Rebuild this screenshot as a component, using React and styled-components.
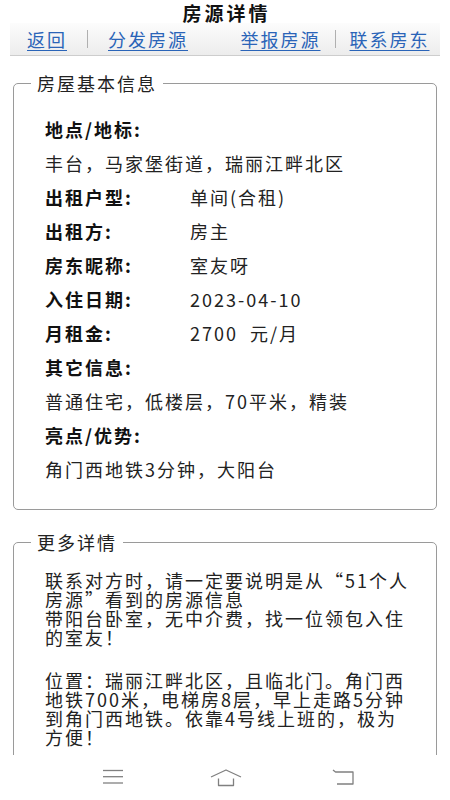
import React from "react";
import styled, { createGlobalStyle } from "styled-components";

const GlobalStyle = createGlobalStyle`
  html, body {
    margin: 0;
    padding: 0;
    background: #ffffff;
  }
  body {
    font-family: "Noto Sans CJK SC", "Liberation Sans", sans-serif;
    color: #222;
  }
`;

const Page = styled.div`
  display: flex;
  flex-direction: column;
  width: 450px;
`;

const Title = styled.h1`
  margin: 0;
  height: 23px;
  line-height: 26px;
  font-size: 19px;
  font-weight: 700;
  letter-spacing: 3px;
  padding-left: 3px;
  text-align: center;
  color: #111;
`;

const NavBar = styled.nav`
  display: flex;
  margin: 0 10px;
  height: 32px;
  background: linear-gradient(#fcfcfc, #ececec);
  border-bottom: 1px solid #cdcdcd;
`;

const NavGroup = styled.div`
  flex: 1;
  display: flex;
  align-items: center;
  gap: ${(p) => p.$gap}px;
  padding-left: ${(p) => p.$pad}px;
`;

const NavLink = styled.a`
  font-size: 18px;
  letter-spacing: 2px;
  line-height: 26px;
  color: #2a64b8;
  text-decoration: underline;
  text-underline-offset: 3px;
  cursor: pointer;
`;

const Sep = styled.span`
  width: 1px;
  height: 18px;
  background: #b0b0b0;
`;

const Panel = styled.fieldset`
  margin: ${(p) => p.$top}px 13px 0;
  padding: 19px 22px ${(p) => p.$bottom}px 31px;
  border: 1px solid #9a9a9a;
  border-radius: 5px;
  min-width: 0;
`;

const Legend = styled.legend`
  margin-left: -14px;
  padding: 0 6px;
  font-size: 18px;
  line-height: 20px;
  letter-spacing: 2px;
  color: #222;
`;

const InfoGrid = styled.div`
  display: grid;
  grid-template-columns: 145px 1fr;
  grid-auto-rows: 34px;
  align-items: center;
  font-size: 18px;
  letter-spacing: 2px;
  line-height: 34px;
`;

const Label = styled.div`
  font-weight: 700;
  color: #111;
  grid-column: ${(p) => (p.$wide ? "1 / -1" : "auto")};
`;

const Value = styled.div`
  color: #222;
  white-space: pre;
  grid-column: ${(p) => (p.$wide ? "1 / -1" : "auto")};
`;

const Para = styled.p`
  margin: ${(p) => p.$top || 0}px 0 0;
  font-size: 18px;
  letter-spacing: 2px;
  line-height: 19px;
  color: #222;
  white-space: pre-line;
`;

const SystemBar = styled.div`
  position: fixed;
  left: 0;
  right: 0;
  bottom: 0;
  height: 45px;
  background: #ffffff;
`;

const SysButton = styled.div`
  position: absolute;
  left: ${(p) => p.$x}px;
  top: 14px;
  display: flex;
`;

const info = [
  { label: "地点/地标:", value: "丰台，马家堡街道，瑞丽江畔北区", stacked: true },
  { label: "出租户型:", value: "单间(合租)" },
  { label: "出租方:", value: "房主" },
  { label: "房东昵称:", value: "室友呀" },
  { label: "入住日期:", value: "2023-04-10" },
  { label: "月租金:", value: "2700  元/月" },
  { label: "其它信息:", value: "普通住宅，低楼层，70平米，精装", stacked: true },
  { label: "亮点/优势:", value: "角门西地铁3分钟，大阳台", stacked: true },
];

function MenuIcon() {
  return (
    <svg width="22" height="16" viewBox="0 0 22 16" fill="none" stroke="#808080" strokeWidth="1.3">
      <line x1="1" y1="1.5" x2="21" y2="1.5" />
      <line x1="1" y1="7.7" x2="21" y2="7.7" />
      <line x1="1" y1="14" x2="21" y2="14" />
    </svg>
  );
}

function HomeIcon() {
  return (
    <svg width="32" height="18" viewBox="0 0 32 18" fill="none" stroke="#808080" strokeWidth="1.3" strokeLinejoin="round">
      <polyline points="1,8 16,1 31,8" />
      <polyline points="8.5,9.5 8.5,16.5 23.5,16.5 23.5,9.5" />
    </svg>
  );
}

function BackIcon() {
  return (
    <svg width="23" height="17" viewBox="0 0 23 17" fill="none" stroke="#808080" strokeWidth="1.3" strokeLinejoin="round">
      <polyline points="1,1 3.5,3 21,3 21,15 5,15" />
    </svg>
  );
}

export default function App() {
  return (
    <>
      <GlobalStyle />
      <Page>
        <Title>房源详情</Title>
        <NavBar>
          <NavGroup $pad={17} $gap={20}>
            <NavLink>返回</NavLink>
            <Sep />
            <NavLink>分发房源</NavLink>
          </NavGroup>
          <NavGroup $pad={14} $gap={14}>
            <NavLink>举报房源</NavLink>
            <Sep />
            <NavLink>联系房东</NavLink>
          </NavGroup>
        </NavBar>

        <Panel $top={17} $bottom={23}>
          <Legend>房屋基本信息</Legend>
          <InfoGrid>
            {info.map((item) =>
              item.stacked ? (
                <React.Fragment key={item.label}>
                  <Label $wide>{item.label}</Label>
                  <Value $wide>{item.value}</Value>
                </React.Fragment>
              ) : (
                <React.Fragment key={item.label}>
                  <Label>{item.label}</Label>
                  <Value>{item.value}</Value>
                </React.Fragment>
              )
            )}
          </InfoGrid>
        </Panel>

        <Panel $top={22} $bottom={40}>
          <Legend>更多详情</Legend>
          <Para>
            {"联系对方时，请一定要说明是从“51个人房源”看到的房源信息\n带阳台卧室，无中介费，找一位领包入住的室友！"}
          </Para>
          <Para $top={24}>
            {"位置：瑞丽江畔北区，且临北门。角门西地铁700米，电梯房8层，早上走路5分钟到角门西地铁。依靠4号线上班的，极为方便！"}
          </Para>
        </Panel>
      </Page>

      <SystemBar>
        <SysButton $x={102}>
          <MenuIcon />
        </SysButton>
        <SysButton $x={210}>
          <HomeIcon />
        </SysButton>
        <SysButton $x={332}>
          <BackIcon />
        </SysButton>
      </SystemBar>
    </>
  );
}
